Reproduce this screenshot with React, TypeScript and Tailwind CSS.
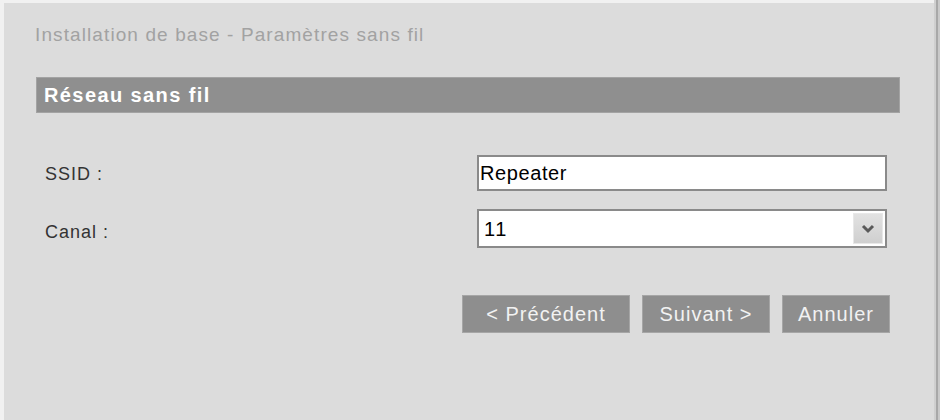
import React, { useState } from 'react';

function App() {
  const [ssid, setSsid] = useState('Repeater');
  const [canal, setCanal] = useState('11');

  return (
    <div className="w-[940px] h-[420px] overflow-hidden bg-[#dcdcdc] font-['Liberation_Sans',Arial,sans-serif]">
      <div className="flex h-full">
        <div className="flex-1 h-full border-t-[3px] border-l-[4px] border-[#f1f1f1] pl-[31px] pt-[20px]">
          <h1 className="text-[19px] leading-[24px] text-[#a2a2a2] tracking-[1.1px]">
            Installation de base - Paramètres sans fil
          </h1>

          <div className="mt-[30px] ml-[1px] w-[864px] h-[36px] bg-[#8f8f8f] border border-[#a3a3a3] flex items-center pl-[7px]">
            <span className="text-[20px] font-bold text-white tracking-[1.4px]">Réseau sans fil</span>
          </div>

          <div className="mt-[42px] flex items-center">
            <label className="w-[442px] pl-[10px] pt-[2px] text-[18px] text-[#333] tracking-[1px]">SSID :</label>
            <input
              value={ssid}
              onChange={(e) => setSsid(e.target.value)}
              className="w-[410px] h-[36px] bg-white border-2 border-[#8a8a8a] px-[1px] text-[20px] tracking-[0.6px] text-black outline-none"
            />
          </div>

          <div className="mt-[18px] flex items-center">
            <label className="w-[442px] pl-[10px] pt-[8px] text-[18px] text-[#333] tracking-[1px]">Canal :</label>
            <div className="relative w-[410px] h-[39px] bg-white border-2 border-[#8a8a8a]">
              <select
                value={canal}
                onChange={(e) => setCanal(e.target.value)}
                className="w-full h-full appearance-none bg-transparent pl-[5px] text-[20px] tracking-[1.5px] text-black outline-none"
              >
                {Array.from({ length: 13 }, (_, i) => (
                  <option key={i + 1} value={String(i + 1)}>{i + 1}</option>
                ))}
              </select>
              <div className="absolute right-[2px] top-[2px] w-[30px] h-[31px] bg-gradient-to-b from-[#e2e2e2] to-[#cfcfcf] border border-[#e8e8e8] flex items-center justify-center pointer-events-none">
                <svg width="14" height="10" viewBox="0 0 14 10">
                  <path d="M2 2 L7 7 L12 2" fill="none" stroke="#5a5a5a" strokeWidth="3" />
                </svg>
              </div>
            </div>
          </div>

          <div className="mt-[47px] flex gap-[12px] pl-[427px]">
            <button className="w-[168px] h-[38px] bg-[#8e8e8e] border border-[#a6a6a6] text-[20px] tracking-[1px] text-[#f2f2f2]">
              &lt; Précédent
            </button>
            <button className="w-[128px] h-[38px] bg-[#8e8e8e] border border-[#a6a6a6] text-[20px] tracking-[1px] text-[#f2f2f2]">
              Suivant &gt;
            </button>
            <button className="w-[108px] h-[38px] bg-[#8e8e8e] border border-[#a6a6a6] text-[20px] tracking-[1px] text-[#f2f2f2]">
              Annuler
            </button>
          </div>
        </div>
        <div className="w-[6px] h-full flex">
          <div className="w-[2px] bg-[#cfcfcf]" />
          <div className="w-[2px] bg-[#a8a8a8]" />
          <div className="w-[2px] bg-[#c9c9c9]" />
        </div>
      </div>
    </div>
  );
}

export default App;
